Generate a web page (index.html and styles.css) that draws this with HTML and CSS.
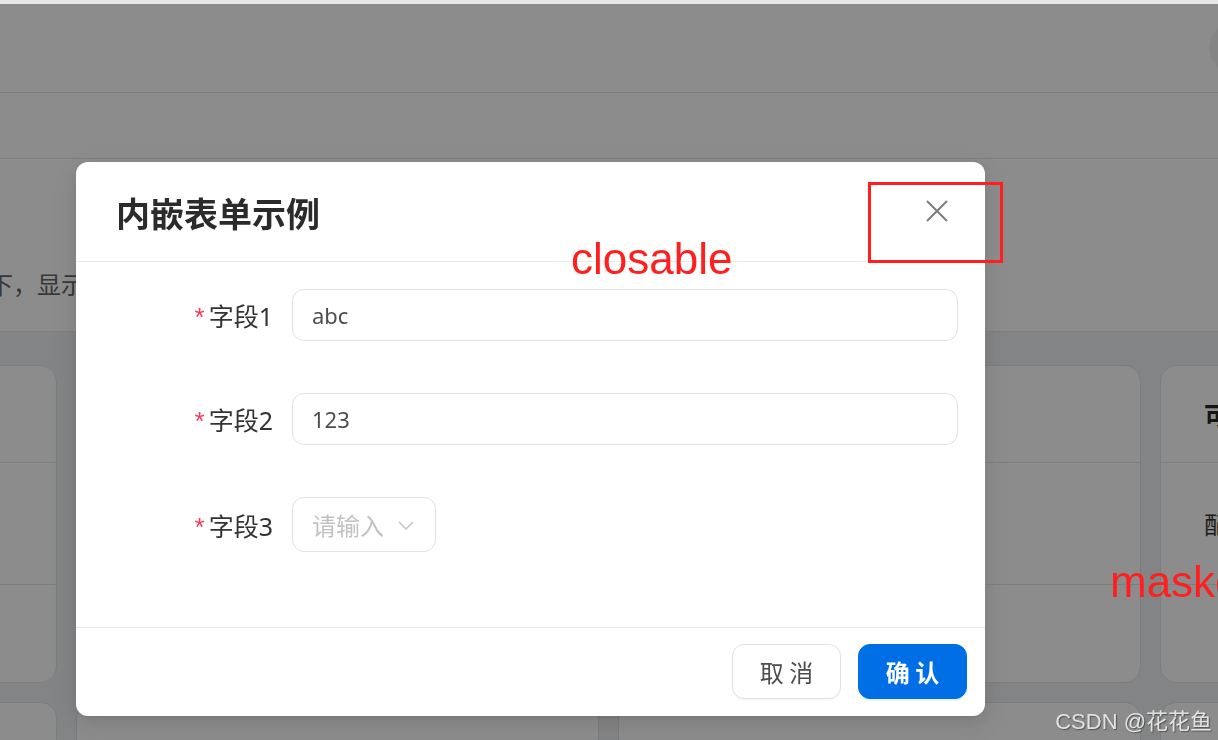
FILE: index.html
```html
<!DOCTYPE html>
<html lang="zh-CN">
<head>
    <meta charset="UTF-8">
    <meta name="viewport" content="width=device-width, initial-scale=1.0">
    <title>内嵌表单示例</title>
    <link rel="stylesheet" href="styles.css">
</head>
<body>
    <div class="top-strip"></div>
    <header class="nav">
        <div class="avatar"></div>
    </header>
    <div class="tabs"></div>
    <section class="intro">
        <p class="desc">下，显示遮罩层，点击遮罩层可以关闭弹窗</p>
    </section>

    <main class="cards">
        <div class="card">
            <div class="card-head">基础弹窗</div>
            <div class="card-body">点击按钮打开弹窗</div>
            <div class="card-foot"></div>
        </div>
        <div class="card">
            <div class="card-head">内嵌表单示例</div>
            <div class="card-body">弹窗中嵌入表单</div>
            <div class="card-foot"></div>
        </div>
        <div class="card">
            <div class="card-head">自定义页脚</div>
            <div class="card-body">自定义按钮</div>
            <div class="card-foot"></div>
        </div>
        <div class="card">
            <div class="card-head">可关闭弹窗</div>
            <div class="card-body">配置 closable 属性</div>
            <div class="card-foot"></div>
        </div>
        <div class="card">
            <div class="card-head">异步关闭</div>
            <div class="card-body"></div>
        </div>
        <div class="card">
            <div class="card-head">内嵌表单示例（二）</div>
            <div class="card-body"></div>
        </div>
        <div class="card">
            <div class="card-head">全屏弹窗示例</div>
            <div class="card-body"></div>
        </div>
        <div class="card">
            <div class="card-head">拖拽弹窗</div>
            <div class="card-body"></div>
        </div>
    </main>

    <div class="mask"></div>

    <div class="modal">
        <div class="modal-head">
            <h2 class="modal-title">内嵌表单示例</h2>
            <button type="button" class="modal-close" aria-label="关闭">
                <svg width="22" height="22" viewBox="0 0 22 22">
                    <path d="M1 1 L21 21 M21 1 L1 21" stroke="#7d7d7d" stroke-width="2" fill="none"/>
                </svg>
            </button>
        </div>
        <form class="modal-body">
            <div class="form-row">
                <label class="form-label" for="f1"><span class="req">*</span>字段1</label>
                <input class="form-input" id="f1" type="text" value="abc">
            </div>
            <div class="form-row">
                <label class="form-label" for="f2"><span class="req">*</span>字段2</label>
                <input class="form-input" id="f2" type="text" value="123">
            </div>
            <div class="form-row">
                <label class="form-label"><span class="req">*</span>字段3</label>
                <div class="form-select">
                    <span class="placeholder">请输入</span>
                    <svg width="16" height="10" viewBox="0 0 16 10">
                        <polyline points="1,1 8,8 15,1" stroke="#c4c4c4" stroke-width="1.5" fill="none"/>
                    </svg>
                </div>
            </div>
        </form>
        <div class="modal-foot">
            <button type="button" class="btn">取 消</button>
            <button type="button" class="btn btn-primary">确 认</button>
        </div>
    </div>

    <div class="note-box"></div>
    <div class="note note-closable">closable</div>
    <div class="note note-mask">masked</div>
    <div class="watermark">CSDN @花花鱼</div>
</body>
</html>
```

FILE: styles.css
```css
body {
    margin: 0;
    width: 1218px;
    height: 740px;
    overflow: hidden;
    background-color: #eff0f2;
    font-family: "Noto Sans", "Noto Sans CJK SC", sans-serif;
    color: #333;
}
.top-strip {
    height: 4px;
    background-color: #e6e6e6;
}
.nav {
    height: 88px;
    background: #fff;
    border-bottom: 1px solid #e8e8e8;
    display: flex;
    align-items: center;
    justify-content: flex-end;
}
.avatar {
    width: 48px;
    height: 48px;
    border-radius: 50%;
    background-color: #f2f2f2;
    margin-right: -39px;
    flex-shrink: 0;
}
.tabs {
    height: 65px;
    background: #fff;
    border-bottom: 1px solid #e8e8e8;
}
.intro {
    background: #fff;
    border-bottom: 1px solid #e6e7e9;
    padding-top: 108px;
    box-sizing: border-box;
    height: 173px;
}
.desc {
    margin: 0 0 0 -11px;
    font-size: 24px;
    line-height: 34px;
    color: #666;
    white-space: nowrap;
    font-family: "Noto Sans CJK SC", sans-serif;
}
.cards {
    display: grid;
    grid-template-columns: repeat(4, 523px);
    gap: 19px;
    margin-left: -466px;
    padding-top: 33px;
}
.card {
    background: #fff;
    border: 1px solid #e3e4e6;
    border-radius: 16px;
    height: 316px;
    display: flex;
    flex-direction: column;
    overflow: hidden;
}
.card-head {
    height: 96px;
    border-bottom: 1px solid #e6e7e9;
    padding: 0 43px;
    display: flex;
    align-items: center;
    font-size: 26px;
    font-weight: bold;
    color: #262626;
    white-space: nowrap;
    font-family: "Noto Sans CJK SC", sans-serif;
}
.card-body {
    height: 121px;
    border-bottom: 1px solid #e6e7e9;
    padding: 0 43px;
    display: flex;
    align-items: center;
    font-size: 24px;
    color: #333;
    white-space: nowrap;
    font-family: "Noto Sans CJK SC", sans-serif;
}
.card-foot {
    flex: 1;
}

/* overlay */
.mask {
    position: fixed;
    top: 4px;
    left: 0;
    right: 0;
    bottom: 0;
    background: rgba(0, 0, 0, 0.45);
}
.modal {
    position: fixed;
    left: 76px;
    top: 162px;
    width: 909px;
    height: 554px;
    background: #fff;
    border-radius: 12px;
    display: flex;
    flex-direction: column;
    box-shadow: 0 6px 16px 0 rgba(0, 0, 0, 0.08), 0 3px 6px -4px rgba(0, 0, 0, 0.12), 0 9px 28px 8px rgba(0, 0, 0, 0.05);
}
.modal-head {
    height: 99px;
    border-bottom: 1px solid #ebebeb;
    display: flex;
    align-items: center;
    justify-content: space-between;
    padding: 0 37px 0 40px;
    flex-shrink: 0;
}
.modal-title {
    margin: 0;
    font-size: 34px;
    font-weight: bold;
    color: #2b2b2b;
    font-family: "Noto Sans CJK SC", sans-serif;
    padding-top: 2px;
}
.modal-close {
    background: none;
    border: none;
    padding: 0;
    width: 22px;
    height: 22px;
    margin-top: -2px;
    cursor: pointer;
}
.modal-close svg {
    display: block;
}
.modal-body {
    flex: 1;
    margin: 0;
    padding: 27px 27px 0 0;
}
.form-row {
    display: flex;
    align-items: center;
    gap: 19px;
    margin-bottom: 52px;
}
.form-label {
    width: 197px;
    flex-shrink: 0;
    text-align: right;
    font-size: 25px;
    color: #333;
    font-family: "Noto Sans", "Noto Sans CJK SC", sans-serif;
}
.req {
    color: #f53b5c;
    margin-right: 4px;
    font-size: 26px;
    font-family: "Liberation Sans", sans-serif;
}
.form-input {
    flex: 1;
    height: 52px;
    box-sizing: border-box;
    border: 1px solid #e2e2e2;
    border-radius: 12px;
    padding: 0 19px;
    font-size: 22px;
    color: #4d4d4d;
    font-family: "Noto Sans", sans-serif;
    outline: none;
}
.form-select {
    width: 144px;
    height: 55px;
    box-sizing: border-box;
    border: 1px solid #e2e2e2;
    border-radius: 12px;
    padding: 0 21px 0 19px;
    display: flex;
    align-items: center;
    justify-content: space-between;
}
.placeholder {
    font-size: 24px;
    color: #c2c2c2;
    font-family: "Noto Sans CJK SC", sans-serif;
}
.form-select svg {
    display: block;
    margin-top: 2px;
}
.modal-foot {
    height: 89px;
    border-top: 1px solid #e6e6e6;
    display: flex;
    align-items: flex-start;
    justify-content: flex-end;
    gap: 17px;
    padding: 16px 18px 0 0;
    box-sizing: border-box;
}
.btn {
    width: 109px;
    height: 55px;
    border: 1px solid #e0e0e0;
    border-radius: 12px;
    background: #fff;
    font-size: 24px;
    color: #4d4d4d;
    font-family: "Noto Sans CJK SC", sans-serif;
    box-shadow: 0 2px 0 rgba(0, 0, 0, 0.02);
    cursor: pointer;
}
.btn-primary {
    background-color: #006fe6;
    border-color: #006fe6;
    color: #fff;
    font-weight: bold;
    box-shadow: 0 2px 0 rgba(5, 145, 255, 0.1);
}

/* annotations */
.note-box {
    position: fixed;
    left: 868px;
    top: 182px;
    width: 129px;
    height: 75px;
    border: 3px solid #ff1f1f;
}
.note {
    position: fixed;
    font-family: "Liberation Sans", sans-serif;
    font-size: 44px;
    line-height: 1;
    color: #ff1f1f;
    white-space: nowrap;
}
.note-closable {
    left: 571px;
    top: 237px;
}
.note-mask {
    left: 1110px;
    top: 560px;
}
.watermark {
    position: fixed;
    right: 6px;
    bottom: 7px;
    font-size: 22px;
    line-height: 1;
    color: #e2e2e2;
    text-shadow: 1px 1px 1px rgba(60, 60, 60, 0.7);
    font-family: "Liberation Sans", "Noto Sans CJK SC", sans-serif;
}
```
